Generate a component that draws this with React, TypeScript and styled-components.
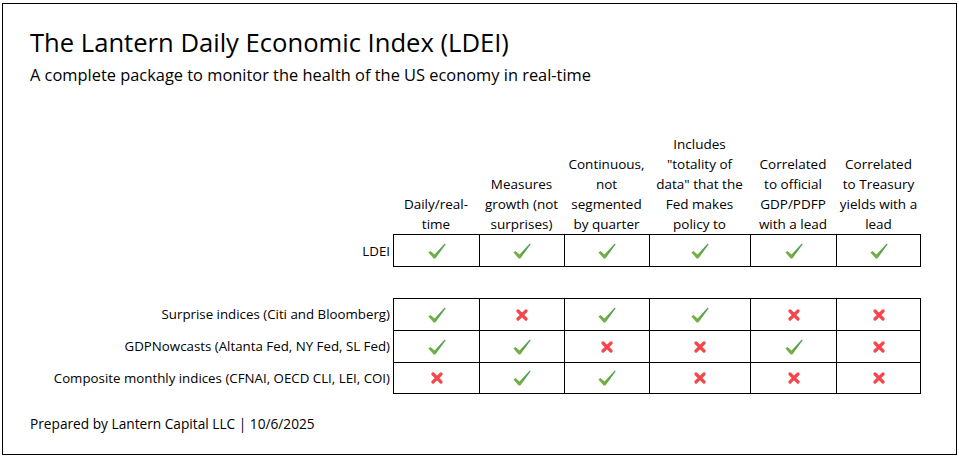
import React from "react";
import styled, { createGlobalStyle } from "styled-components";

const GlobalStyle = createGlobalStyle`
  html, body {
    margin: 0;
    padding: 0;
    background: #ffffff;
  }
  body {
    font-family: "Open Sans", "Liberation Sans", sans-serif;
    color: #000000;
  }
`;

const COLUMNS = "363px 86px 85px 85px 101px 86px 85px";

const Frame = styled.div`
  box-sizing: border-box;
  margin: 3px 0 0 2px;
  width: 955px;
  height: 452px;
  border: 1px solid #000;
  padding: 24px 0 0 27px;
  display: flex;
  flex-direction: column;
`;

const Title = styled.h1`
  margin: 0;
  font-size: 25.6px;
  font-weight: 400;
  line-height: 30px;
`;

const Subtitle = styled.p`
  margin: 7px 0 0;
  font-size: 16.4px;
  line-height: 20px;
`;

const Table = styled.div`
  margin-top: 49px;
  display: flex;
  flex-direction: column;
`;

const Row = styled.div`
  display: grid;
  grid-template-columns: ${COLUMNS};
`;

const HeadCell = styled.div`
  display: flex;
  flex-direction: column;
  justify-content: flex-end;
  align-items: center;
  font-size: 13.5px;
  line-height: 20px;
  white-space: nowrap;
`;

const Block = styled.div<{ $gap?: number }>`
  margin-top: ${(p) => p.$gap ?? 0}px;
  display: flex;
  flex-direction: column;

  & > ${Row}:last-child > div:not(:first-child) {
    border-bottom: 1px solid #000;
  }
`;

const Label = styled.div`
  display: flex;
  align-items: center;
  justify-content: flex-end;
  padding-right: 3px;
  font-size: 13.3px;
  white-space: nowrap;
`;

const MarkCell = styled.div<{ $h: number }>`
  box-sizing: border-box;
  height: ${(p) => p.$h}px;
  border-top: 1px solid #000;
  border-left: 1px solid #000;
  display: flex;
  align-items: center;
  justify-content: center;

  &:last-child {
    border-right: 1px solid #000;
  }
`;

const Footer = styled.p`
  margin: 20px 0 0;
  font-size: 13.7px;
  line-height: 20px;
`;

const Check = () => (
  <svg width="18" height="16" viewBox="0 0 18 16">
    <defs>
      <linearGradient id="chk" x1="0" y1="1" x2="1" y2="0">
        <stop offset="0" stopColor="#8fb83a" />
        <stop offset="0.5" stopColor="#5aa64c" />
        <stop offset="1" stopColor="#4f9f56" />
      </linearGradient>
    </defs>
    <path d="M0.4 9.4 L2.4 7.9 L6.6 11.4 L16.8 0.4 L17.7 1.3 L7.4 15.5 L5.6 15.5 Z" fill="url(#chk)" />
  </svg>
);

const Cross = () => (
  <svg width="12" height="12" viewBox="0 0 12 12">
    <path d="M2 2 L10 10 M10 2 L2 10" stroke="#f5474b" strokeWidth="3.2" strokeLinecap="round" />
  </svg>
);

const headers: string[][] = [
  ["Daily/real-", "time"],
  ["Measures", "growth (not", "surprises)"],
  ["Continuous,", "not", "segmented", "by quarter"],
  ["Includes", "\"totality of", "data\" that the", "Fed makes", "policy to"],
  ["Correlated", "to official", "GDP/PDFP", "with a lead"],
  ["Correlated", "to Treasury", "yields with a", "lead"],
];

type Line = { name: string; marks: boolean[] };

const lead: Line = { name: "LDEI", marks: [true, true, true, true, true, true] };

const others: Line[] = [
  { name: "Surprise indices (Citi and Bloomberg)", marks: [true, false, true, true, false, false] },
  { name: "GDPNowcasts (Altanta Fed, NY Fed, SL Fed)", marks: [true, true, false, false, true, false] },
  { name: "Composite monthly indices (CFNAI, OECD CLI, LEI, COI)", marks: [false, true, true, false, false, false] },
];

const MarkRow = ({ line, h }: { line: Line; h: number }) => (
  <Row>
    <Label>{line.name}</Label>
    {line.marks.map((m, i) => (
      <MarkCell key={i} $h={h}>
        {m ? <Check /> : <Cross />}
      </MarkCell>
    ))}
  </Row>
);

export default function App() {
  return (
    <>
      <GlobalStyle />
      <Frame>
        <Title>The Lantern Daily Economic Index (LDEI)</Title>
        <Subtitle>A complete package to monitor the health of the US economy in real-time</Subtitle>
        <Table>
          <Row>
            <div />
            {headers.map((lines, i) => (
              <HeadCell key={i}>
                {lines.map((l) => (
                  <span key={l}>{l}</span>
                ))}
              </HeadCell>
            ))}
          </Row>
          <Block>
            <MarkRow line={lead} h={33} />
          </Block>
          <Block $gap={31}>
            {others.map((o) => (
              <MarkRow key={o.name} line={o} h={32} />
            ))}
          </Block>
        </Table>
        <Footer>Prepared by Lantern Capital LLC | 10/6/2025</Footer>
      </Frame>
    </>
  );
}
